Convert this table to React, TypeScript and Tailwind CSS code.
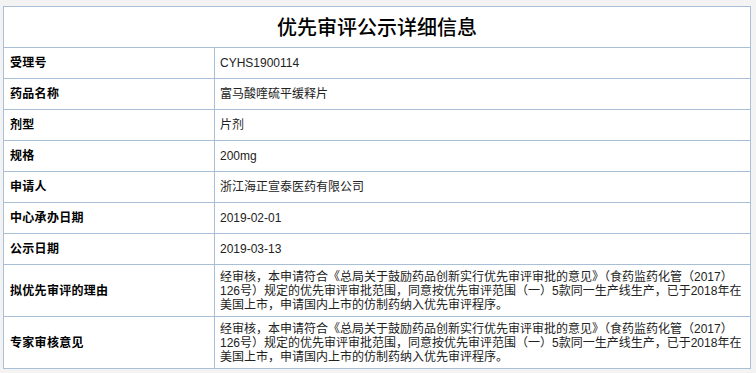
import React from "react";

const rows: [string, React.ReactNode][] = [
  ["受理号", "CYHS1900114"],
  ["药品名称", "富马酸喹硫平缓释片"],
  ["剂型", "片剂"],
  ["规格", "200mg"],
  ["申请人", "浙江海正宣泰医药有限公司"],
  ["中心承办日期", "2019-02-01"],
  ["公示日期", "2019-03-13"],
];

const reason = (
  <>
    经审核，本申请符合《总局关于鼓励药品创新实行优先审评审批的意见》（食药监药化管（2017）
    <br />
    126号）规定的优先审评审批范围，同意按优先审评范围（一）5款同一生产线生产，已于2018年在
    <br />
    美国上市，申请国内上市的仿制药纳入优先审评程序。
  </>
);

export default function App() {
  return (
    <div
      className="w-[756px] h-[373px] bg-[#f3f3f3] pt-[6px] pl-[3px] overflow-hidden"
      style={{ fontFamily: '"Liberation Sans", "Noto Sans CJK SC", sans-serif' }}
    >
      <table className="w-[748px] table-fixed border-collapse bg-white text-[12px]">
        <colgroup>
          <col className="w-[211px]" />
          <col />
        </colgroup>
        <tbody>
          <tr className="h-[41px]">
            <td
              colSpan={2}
              className="border border-[#a8bfd5] text-center text-[20px] font-medium text-black p-0"
              style={{ fontFamily: '"Noto Sans CJK SC", sans-serif' }}
            >
              优先审评公示详细信息
            </td>
          </tr>
          {rows.map(([k, v]) => (
            <tr key={k} className="h-[31px]">
              <td className="border border-[#a8bfd5] pl-[6px] font-bold text-black tracking-[0.3px] p-0 align-middle">
                {k}
              </td>
              <td className="border border-[#a8bfd5] pl-[5px] text-[#222] p-0 align-middle">{v}</td>
            </tr>
          ))}
          {["拟优先审评的理由", "专家审核意见"].map((k) => (
            <tr key={k} className="h-[52px]">
              <td className="border border-[#a8bfd5] pl-[6px] font-bold text-black tracking-[0.3px] p-0 align-middle">
                {k}
              </td>
              <td className="border border-[#a8bfd5] pl-[5px] text-[#222] p-0 align-middle leading-[14px] whitespace-nowrap overflow-hidden">
                {reason}
              </td>
            </tr>
          ))}
        </tbody>
      </table>
    </div>
  );
}
